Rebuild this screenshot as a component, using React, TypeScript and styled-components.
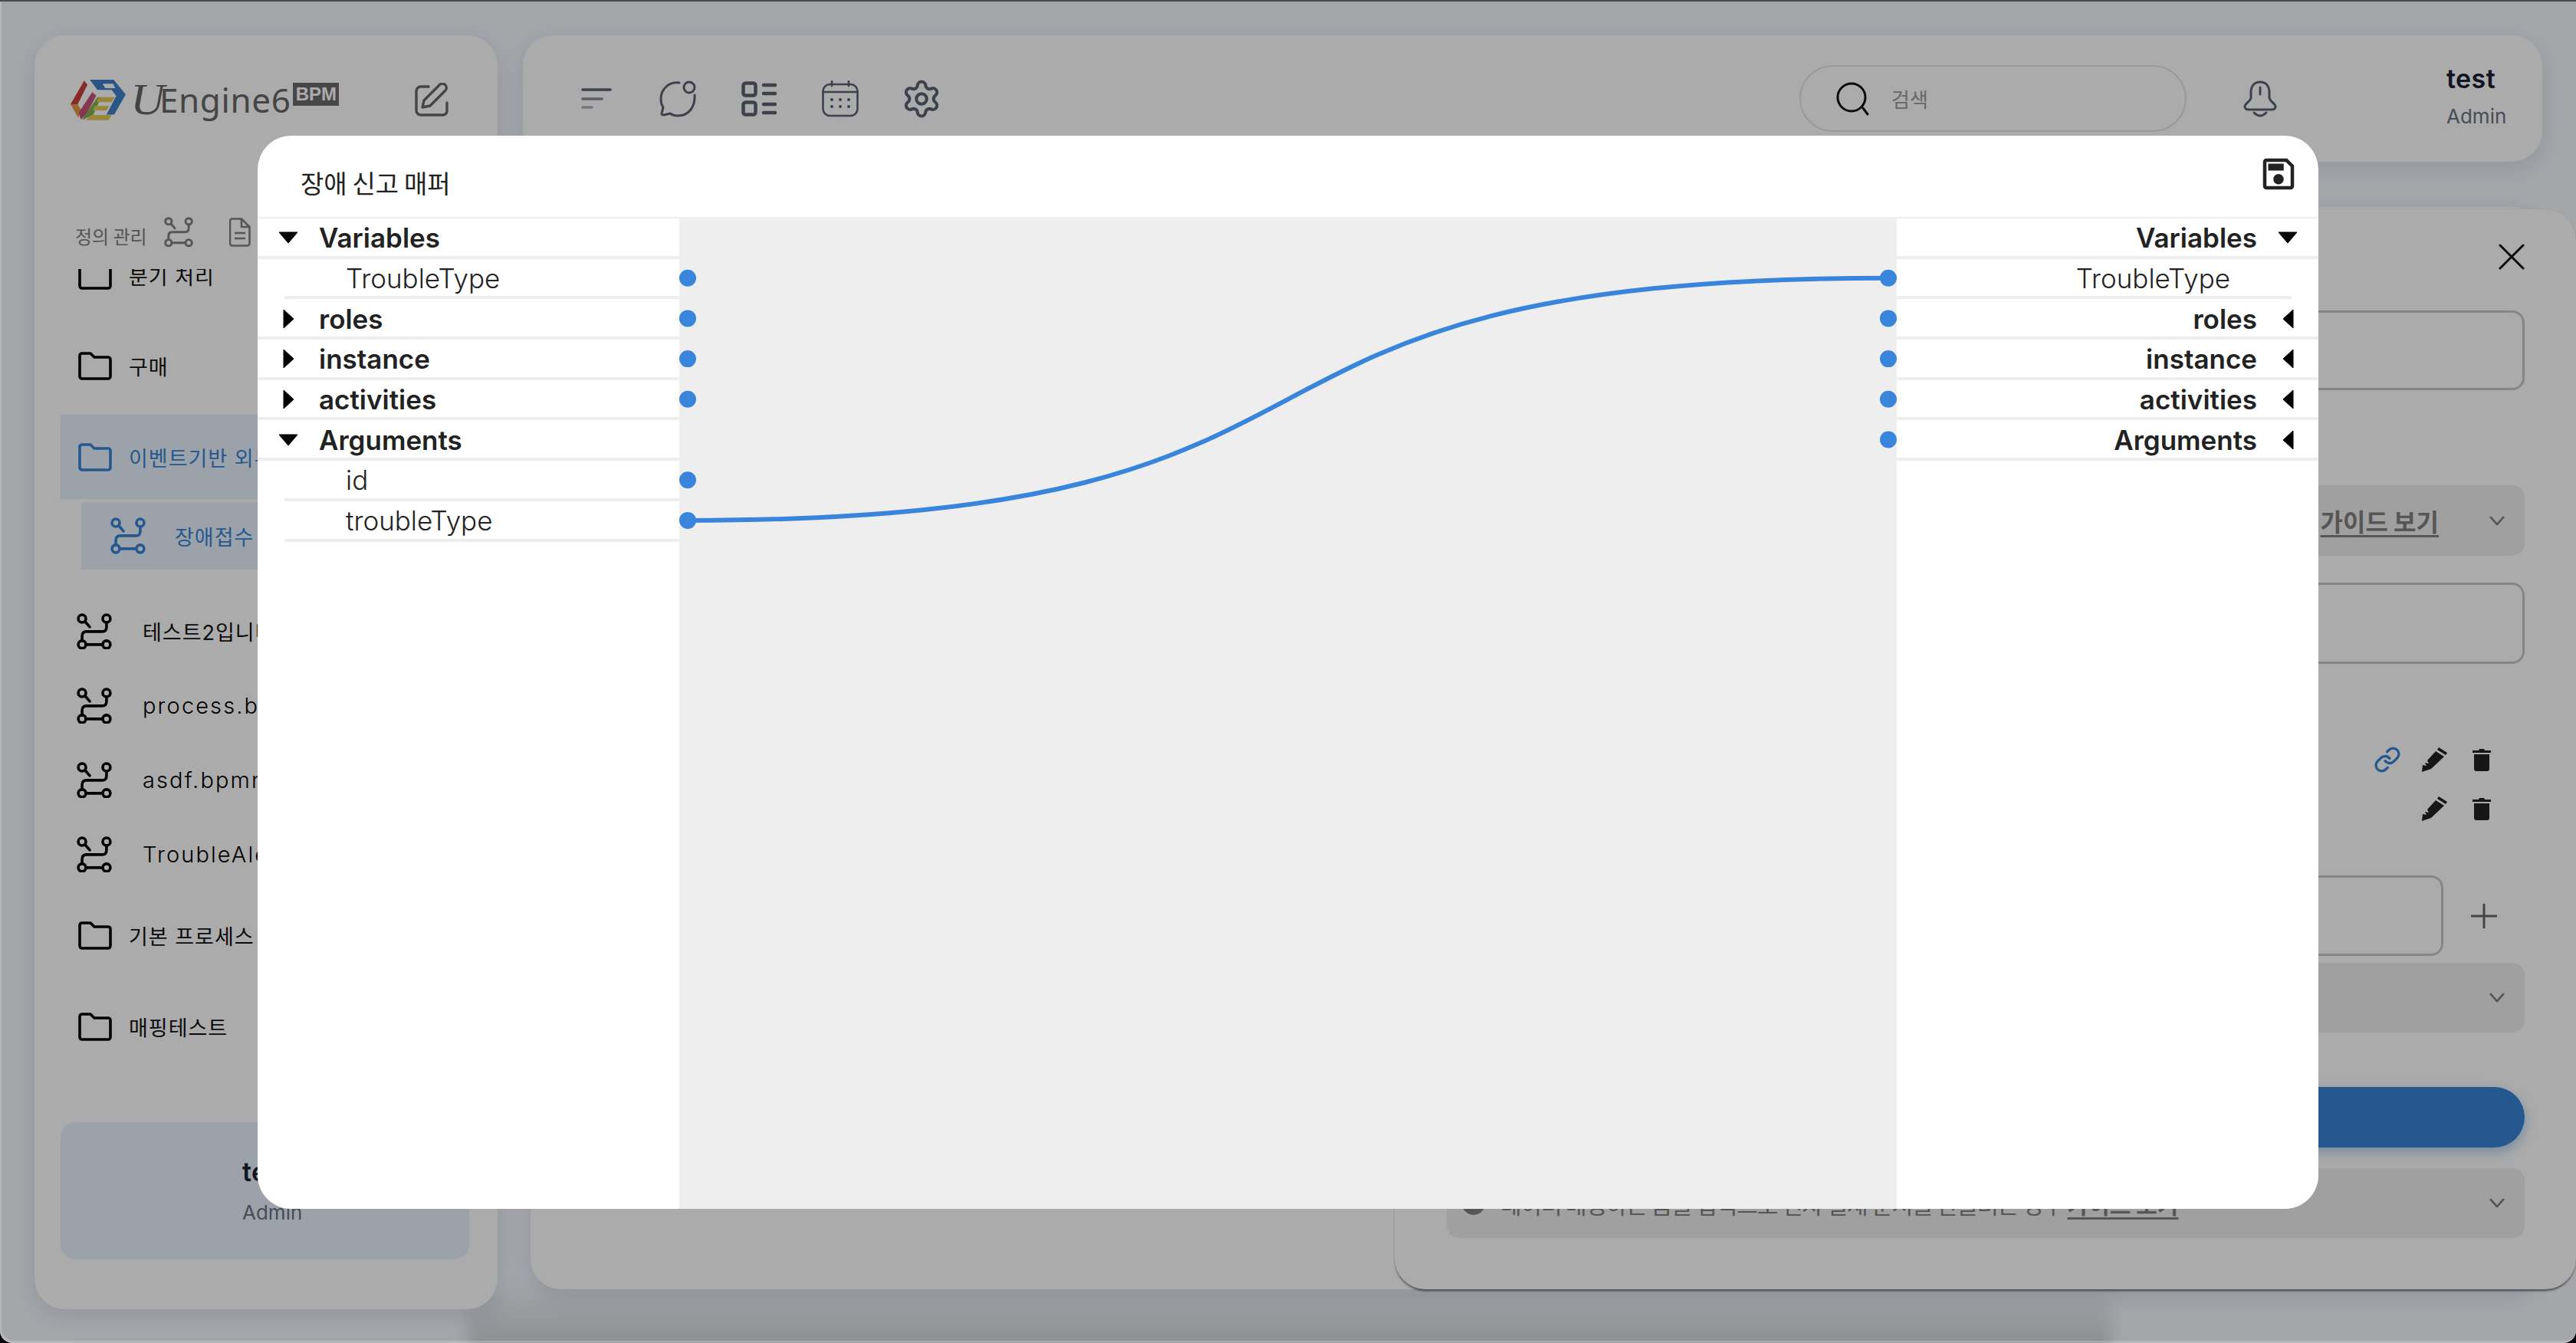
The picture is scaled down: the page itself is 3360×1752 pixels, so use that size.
// App.tsx
import styled, { createGlobalStyle } from 'styled-components';
import { Link as LinkIcon, Settings } from 'lucide-react';

const GlobalStyle = createGlobalStyle`
  html, body { margin: 0; padding: 0; background: #000; }
  body { font-family: Inter, "Noto Sans CJK KR", sans-serif; }
  * { box-sizing: border-box; }
`;

const KR = `Inter, "Noto Sans CJK KR", sans-serif`;

// ---------- page ----------
const Screen = styled.div`
  position: relative;
  width: 3360px; height: 1752px;
  overflow: hidden;
  background: #f5f8fe;
  border-radius: 0 0 16px 16px;
`;
const DockShadow = styled.div`
  position: absolute;
  left: 610px; width: 2144px; top: 1672px; height: 110px;
  background: linear-gradient(rgba(0, 0, 0, 0), rgba(0, 0, 0, .14) 75%);
  filter: blur(10px);
`;
const Layout = styled.div`
  position: relative;
  display: flex;
  gap: 33px;
  height: 100%;
  padding: 46px 44px 44px 45px;
`;
const Panel = styled.div`
  background: #fff;
  border-radius: 40px;
  box-shadow: 0 8px 30px rgba(90, 110, 140, .18);
`;

// ---------- sidebar ----------
const Sidebar = styled(Panel)`
  width: 604px; flex: none;
  display: flex; flex-direction: column;
`;
const LogoRow = styled.div`
  display: flex; align-items: center; justify-content: space-between;
  margin-top: 57px; height: 54px; padding: 0 64px 0 47px;
`;
const Logo = styled.div`display: flex; align-items: center;`;
const LogoScript = styled.span`
  font-family: "Liberation Serif", serif; font-style: italic;
  font-size: 56px; line-height: 54px; color: #666;
  margin-left: 8px; width: 36px;
  transform: scaleX(1.1);
`;
const LogoWord = styled.span`
  font-family: "Noto Sans", sans-serif;
  font-size: 44px; line-height: 54px; color: #676767; letter-spacing: .6px;
`;
const LogoBadge = styled.span`
  font-family: "Liberation Sans", sans-serif; font-weight: 700;
  align-self: flex-start; margin: 5px 0 0 3px;
  width: 60px; height: 30px; background: #6c6969; color: #fff;
  font-size: 24px; line-height: 29px; text-align: center;
`;
const NavHeader = styled.div`
  display: flex; align-items: center;
  margin-top: 127px; height: 38px; padding-left: 53px;
  font-family: "Noto Sans CJK KR", sans-serif;
  font-size: 24px; color: #7e7e7e;
  svg { flex: none; }
`;
const NavLabel = styled.span`padding-top: 9px;`;
const NavProcess = styled.span`display: flex; margin: 0 47px 0 22px;`;
const TreeScroll = styled.div`
  flex: 1; min-height: 0;
  margin: 29px 37px 0 34px;
  overflow: hidden;
`;
const TreeList = styled.div`display: flex; flex-direction: column; margin-top: -47px;`;
const TreeRow = styled.div<{ $h: number; $mt?: number; $indent?: number; $pad: number; $gap: number; $active?: boolean }>`
  display: flex; align-items: center; flex: none;
  height: ${({ $h }) => $h}px;
  margin-top: ${({ $mt }) => $mt ?? 0}px;
  margin-left: ${({ $indent }) => $indent ?? 0}px;
  padding-left: ${({ $pad }) => $pad}px;
  gap: ${({ $gap }) => $gap}px;
  white-space: nowrap;
  font-family: ${KR};
  font-size: 27px; letter-spacing: 1px;
  color: ${({ $active }) => ($active ? '#3784d5' : '#111')};
  background: ${({ $active }) => ($active ? '#e7f2fe' : 'transparent')};
  svg { flex: none; }
`;
const FileName = styled.span`font-size: 29px; font-weight: 300; letter-spacing: 2.1px; color: #000;`;
const UserCard = styled.div`
  flex: none;
  height: 179px;
  margin: 0 37px 65px 34px;
  padding-left: 237px;
  display: flex; flex-direction: column; justify-content: center; gap: 16px;
  background: #e7f2fe;
  border-radius: 20px;
`;
const UserName = styled.div`font-size: 34px; font-weight: 600; line-height: 40px; color: #1a2233; letter-spacing: .4px;`;
const UserRole = styled.div`font-size: 26px; line-height: 34px; color: #6b7280;`;

// ---------- top bar ----------
const Column = styled.div`flex: 1; min-width: 0; display: flex; flex-direction: column;`;
const TopBar = styled(Panel)`
  flex: none; height: 165px;
  display: flex; align-items: center;
  padding: 0 44px 0 43px;
`;
const ToolSlot = styled.div`width: 106px; display: flex; justify-content: center;`;
const SearchPill = styled.div`
  margin-left: auto;
  width: 505px; height: 87px;
  display: flex; align-items: center; gap: 28px;
  padding-left: 46px;
  border: 2px solid #e1e4e8;
  border-radius: 44px;
  font-family: "Noto Sans CJK KR", sans-serif;
  font-size: 26px; color: #9b9b9b;
`;
const BellSlot = styled.div`display: flex; margin-left: 73px;`;
const TopUser = styled.div`
  margin-left: 220px; width: 81px; margin-top: -6px;
  display: flex; flex-direction: column; gap: 12px;
`;
const MainPanel = styled(Panel)`
  flex: 1;
  margin: 59px 0 26px 10px;
`;

// ---------- drawer behind the dialog ----------
const Drawer = styled.div`
  position: absolute;
  left: 1819px; right: 0; top: 273px; bottom: 70px;
  padding: 45px 67px 0 68px;
  display: flex; flex-direction: column;
  background: #fff;
  border-radius: 40px;
  box-shadow: 0 3px 3px -1px rgba(0, 0, 0, .55), 0 0 2px rgba(0, 0, 0, .12);
`;
const CloseRow = styled.div`display: flex; justify-content: flex-end; height: 34px;`;
const InputBox = styled.div<{ $mt?: number; $h: number }>`
  flex: none;
  height: ${({ $h }) => $h}px;
  margin-top: ${({ $mt }) => $mt ?? 0}px;
  border: 3px solid #c8c8c8;
  border-radius: 16px;
`;
const InfoBar = styled.div<{ $mt: number; $h: number }>`
  flex: none;
  display: flex; align-items: center;
  height: ${({ $h }) => $h}px;
  margin-top: ${({ $mt }) => $mt}px;
  padding: 0 26px 0 20px;
  background: #efefef;
  border-radius: 16px;
  font-family: "Noto Sans CJK KR", sans-serif;
  font-size: 30px; color: #808080;
  white-space: nowrap;
`;
const InfoText = styled.span`flex: 1; margin-left: 20px; letter-spacing: -1.1px;`;
const GuideLink = styled.span`
  font-weight: 700;
  text-decoration: underline; text-decoration-thickness: 3px; text-underline-offset: 5px;
  letter-spacing: 0;
`;
const GuideRight = styled.span`margin-left: auto; margin-right: 66px; font-size: 32px;`;
const ActionRow = styled.div<{ $mt: number }>`
  flex: none;
  display: flex; align-items: center; justify-content: flex-end; gap: 33px;
  height: 34px;
  margin-top: ${({ $mt }) => $mt}px;
  padding-right: 44px;
`;
const LinkSlot = styled.span`display: flex; margin-right: -6px;`;
const AddRow = styled.div`display: flex; flex: none; margin-top: 70px;`;
const AddInput = styled(InputBox)`flex: 1;`;
const AddButton = styled.div`
  width: 106px; flex: none;
  display: flex; align-items: center; justify-content: center;
`;
const PrimaryButton = styled.div`
  flex: none;
  height: 79px; margin-top: 71px;
  background: #3784d5;
  border-radius: 40px;
  box-shadow: 0 6px 16px rgba(55, 132, 213, .4);
`;

// ---------- dialog ----------
const Scrim = styled.div`
  position: absolute; inset: 0;
  background: rgba(0, 0, 0, .33);
  border-top: 2px solid #4a4a4a;
  box-shadow: inset 2px -3px 0 rgba(255, 255, 255, .2);
  border-radius: 0 0 16px 16px;
`;
const Dialog = styled.div`
  position: absolute;
  left: 336px; top: 177px; width: 2688px; height: 1400px;
  display: flex; flex-direction: column;
  background: #fff;
  border-radius: 44px;
  overflow: hidden;
`;
const DialogHeader = styled.div`
  flex: none; height: 106px;
  display: flex; align-items: center; justify-content: space-between;
  padding: 0 25px 0 56px;
`;
const DialogTitle = styled.div`
  padding-top: 16px;
  font-family: "Noto Sans CJK KR", sans-serif;
  font-size: 33px; color: #222; letter-spacing: -.2px;
`;
const SaveGlyph = styled.svg`margin-bottom: 6px;`;
const MapperBody = styled.div`
  flex: 1; min-height: 0;
  display: flex;
  border-top: 2px solid #eee;
`;
const Tree = styled.div`width: 550px; flex: none; background: #fff;`;
const MapRow = styled.div<{ $right?: boolean; $child?: boolean }>`
  display: flex; align-items: center;
  height: 52.7px;
  padding-top: 2px;
  flex-direction: ${({ $right }) => ($right ? 'row-reverse' : 'row')};
  margin-left: ${({ $child, $right }) => ($child && !$right ? 35 : 0)}px;
  margin-right: ${({ $child, $right }) => ($child && $right ? 35 : 0)}px;
  border-bottom: 4px solid #eee;
  font-size: 35px;
  font-weight: ${({ $child }) => ($child ? 300 : 600)};
  color: #222;
`;
const Caret = styled.span`
  flex: none; display: flex; align-items: center; justify-content: center;
  width: 80px;
`;
const ChildLabel = styled.span<{ $right?: boolean }>`
  ${({ $right }) => ($right ? 'margin-right: 80px;' : 'margin-left: 80px;')}
`;
const Canvas = styled.div`flex: 1; min-width: 0; background: #eee;`;
const WireSvg = styled.svg`display: block;`;

// ---------- icons ----------
const FolderIcon = ({ color = '#000' }: { color?: string }) => (
  <svg width="44" height="37" viewBox="0 0 44 37" fill="none">
    <path d="M2 5a3 3 0 0 1 3-3h11l5 5h18a3 3 0 0 1 3 3v22a3 3 0 0 1-3 3H5a3 3 0 0 1-3-3Z" stroke={color} strokeWidth="3.6" strokeLinejoin="round" />
  </svg>
);
const ProcessIcon = ({ color = '#000', w = 46 }: { color?: string; w?: number }) => (
  <svg width={w} height={w * 1.04} viewBox="0 0 46 48" fill="none" stroke={color} strokeWidth="3.6" strokeLinecap="round">
    <circle cx="7" cy="7" r="5" />
    <circle cx="39" cy="7" r="5" />
    <path d="M11 11l6 7" />
    <path d="M39 12v6q0 6-6 6H13q-6 0-6 6v6" />
    <circle cx="7" cy="41" r="5" />
    <circle cx="39" cy="41" r="5" />
    <path d="M12 41h22" />
  </svg>
);
const DocIcon = () => (
  <svg width="28" height="38" viewBox="0 0 28 38" fill="none" stroke="#808080" strokeWidth="2.6" strokeLinejoin="round">
    <path d="M3 1.5h13L26.5 12v21.5a3 3 0 0 1-3 3H4a3 3 0 0 1-3-3V4.500a3 3 0 0 1 2-3Z" />
    <path d="M16 1.500V12h10.500M7 20h14M7 27h14" />
  </svg>
);
const EditIcon = () => (
  <svg width="44" height="44" viewBox="0 0 44 44" fill="none" stroke="#676767" strokeWidth="3.4" strokeLinecap="round" strokeLinejoin="round">
    <path d="M18 5H8a6 6 0 0 0-6 6v25a6 6 0 0 0 6 6h29a6 6 0 0 0 5-5v-11" />
    <path d="M10 32l2-9L32 3a4 4 0 0 1 8 7L20 30Z" />
  </svg>
);
const CubeLogo = () => (
  <svg width="72" height="54" viewBox="0 0 215 160">
    <path fillRule="evenodd" d="M75 2H168L215 60L170 138H140L178 66L160 42H105ZM125 18L135 35H175L165 18Z" fill="#3f80c6" />
    <path d="M53 6L66 22L28 98H0Z" fill="#c9403f" />
    <path d="M0 98H28L42 122L30 150Z" fill="#e89a4a" />
    <path d="M85 50L100 65L60 140L40 158L32 130Z" fill="#c8547a" />
    <path d="M105 70H120L88 140L45 160L60 135Z" fill="#7fb24d" />
    <path d="M110 70H172L160 90H100ZM95 105H150L140 122H86ZM80 140H160L148 160H60Z" fill="#e2c958" />
  </svg>
);
const SortIcon = () => (
  <svg width="40" height="28" viewBox="0 0 40 28" fill="none" strokeLinecap="round" strokeWidth="3.6">
    <path d="M2 2h36" stroke="#5a6272" />
    <path d="M2 14h25" stroke="#8a8f99" />
    <path d="M2 25h12" stroke="#b0b3ba" />
  </svg>
);
const ChatIcon = () => (
  <svg width="48" height="48" viewBox="0 0 48 48" fill="none" stroke="#5a6272" strokeWidth="3" strokeLinecap="round">
    <path d="M26 3C12 1 2 12 2 24c0 5 1 8 3 11l-2 8c0 2 1 2 3 2l8-2c3 2 6 3 10 3 14 0 23-11 22-27" />
    <circle cx="39" cy="9" r="7" />
  </svg>
);
const GridIcon = () => (
  <svg width="46" height="46" viewBox="0 0 46 46" fill="none" stroke="#5a6272" strokeLinecap="round">
    <rect x="2.500" y="2.500" width="16" height="16" rx="3" strokeWidth="4.500" />
    <rect x="2.500" y="27.500" width="16" height="16" rx="3" strokeWidth="4.500" />
    <path d="M29 5h15M29 16h15M29 30h15M29 41h15" strokeWidth="4.500" />
  </svg>
);
const CalendarIcon = () => (
  <svg width="48" height="48" viewBox="0 0 48 48" fill="none" stroke="#5a6272" strokeWidth="2.600" strokeLinecap="round">
    <rect x="1.500" y="5" width="45" height="41" rx="9" />
    <path d="M1.500 15h45M13 1v6M35 1v6" />
    <g fill="#5a6272" stroke="none">
      <circle cx="13" cy="25" r="2" /><circle cx="24" cy="25" r="2" /><circle cx="35" cy="25" r="2" />
      <circle cx="13" cy="34" r="2" /><circle cx="24" cy="34" r="2" /><circle cx="35" cy="34" r="2" />
    </g>
  </svg>
);
const SearchIcon = () => (
  <svg width="44" height="44" viewBox="0 0 44 44" fill="none" stroke="#111" strokeWidth="3" strokeLinecap="round">
    <circle cx="20" cy="20" r="18" />
    <path d="M35 34l6 8" />
  </svg>
);
const BellIcon = () => (
  <svg width="46" height="48" viewBox="0 0 46 48" fill="none" stroke="#5a6272" strokeWidth="3" strokeLinecap="round" strokeLinejoin="round">
    <path d="M23 2C14 2 11 9 11 16v6c0 5-8 8-8 12 0 3 3 4 6 4h28c3 0 6-1 6-4 0-4-8-7-8-12v-6c0-7-3-14-12-14Z" />
    <path d="M23 9v9M15 42q8 8 16 0" />
  </svg>
);
const CloseIcon = () => (
  <svg width="34" height="34" viewBox="0 0 34 34" stroke="#111" strokeWidth="3" strokeLinecap="round">
    <path d="M2 2l30 30M32 2L2 32" />
  </svg>
);
const ChevronIcon = () => (
  <svg width="20" height="13" viewBox="0 0 22 14" fill="none" stroke="#808080" strokeWidth="3" strokeLinecap="round" strokeLinejoin="round">
    <path d="M2 2l9 10 9-10" />
  </svg>
);
const PencilIcon = () => (
  <svg width="33" height="32" viewBox="0 0 33 32" fill="#222">
    <path d="M22 0l11 7-2 3-11-7ZM18 5l11 7L12 28 0 32l1-9 5 1-2-4 5 1-2-4Z" />
  </svg>
);
const TrashIcon = () => (
  <svg width="24" height="30" viewBox="0 0 24 30" fill="#222">
    <path d="M0 3h8l1-2h6l1 2h8v3H0ZM2 8h20v19a3 3 0 0 1-3 3H5a3 3 0 0 1-3-3Z" />
  </svg>
);
const PlusIcon = () => (
  <svg width="34" height="32" viewBox="0 0 34 32" stroke="#666" strokeWidth="3">
    <path d="M0 16h34M17 0v32" />
  </svg>
);
const InfoDot = () => (
  <svg width="30" height="30" viewBox="0 0 30 30"><circle cx="15" cy="15" r="15" fill="#808080" /></svg>
);
const SaveIcon = () => (
  <SaveGlyph width="54" height="54" viewBox="0 0 24 24" fill="#222">
    <path d="M17 3H5c-1.110 0-2 .9-2 2v14c0 1.100.89 2 2 2h14c1.100 0 2-.9 2-2V7l-4-4zm2 16H5V5h11.170L19 7.830V19zm-7-7c-1.660 0-3 1.340-3 3s1.340 3 3 3 3-1.340 3-3-1.340-3-3-3zM6 6h9v4H6z" />
  </SaveGlyph>
);
const TriDown = () => (
  <svg width="26" height="16" viewBox="0 0 26 16"><path d="M1 1h24L13 15Z" fill="#000" stroke="#000" strokeLinejoin="round" /></svg>
);
const TriRight = () => (
  <svg width="15" height="26" viewBox="0 0 15 26"><path d="M1 1v24l13-12Z" fill="#000" stroke="#000" strokeLinejoin="round" /></svg>
);
const TriLeft = () => (
  <svg width="15" height="26" viewBox="0 0 15 26"><path d="M14 1v24L1 13Z" fill="#000" stroke="#000" strokeLinejoin="round" /></svg>
);

// ---------- data ----------
type Node = { label: string; open?: boolean; child?: boolean };

const leftTree: Node[] = [
  { label: 'Variables', open: true },
  { label: 'TroubleType', child: true },
  { label: 'roles' },
  { label: 'instance' },
  { label: 'activities' },
  { label: 'Arguments', open: true },
  { label: 'id', child: true },
  { label: 'troubleType', child: true },
];
const rightTree: Node[] = [
  { label: 'Variables', open: true },
  { label: 'TroubleType', child: true },
  { label: 'roles' },
  { label: 'instance' },
  { label: 'activities' },
  { label: 'Arguments' },
];

const ROW = 52.7;
const rowY = (i: number) => i * ROW + 25;
const leftPorts = leftTree.map((n, i) => (n.open ? -1 : rowY(i))).filter(y => y > 0);
const rightPorts = rightTree.map((n, i) => (n.open ? -1 : rowY(i))).filter(y => y > 0);
const LX = 11;
const RX = 1577;

const MapperTree = ({ nodes, right }: { nodes: Node[]; right?: boolean }) => (
  <Tree>
    {nodes.map(n => (
      <MapRow key={n.label} $right={right} $child={n.child}>
        {n.child ? (
          <ChildLabel $right={right}>{n.label}</ChildLabel>
        ) : (
          <>
            <Caret>{n.open ? <TriDown /> : right ? <TriLeft /> : <TriRight />}</Caret>
            <span>{n.label}</span>
          </>
        )}
      </MapRow>
    ))}
  </Tree>
);

export default function App() {
  const fromY = leftPorts[leftPorts.length - 1];
  const toY = rightPorts[0];
  const bend = (RX - LX) * 0.62;

  return (
    <Screen>
      <GlobalStyle />
      <DockShadow />
      <Layout>
        <Sidebar>
          <LogoRow>
            <Logo>
              <CubeLogo />
              <LogoScript>U</LogoScript>
              <LogoWord>Engine6</LogoWord>
              <LogoBadge>BPM</LogoBadge>
            </Logo>
            <EditIcon />
          </LogoRow>
          <NavHeader>
            <NavLabel>정의 관리</NavLabel>
            <NavProcess><ProcessIcon color="#808080" w={38} /></NavProcess>
            <DocIcon />
          </NavHeader>
          <TreeScroll>
            <TreeList>
              <TreeRow $h={110} $pad={23} $gap={22}><FolderIcon />분기 처리</TreeRow>
              <TreeRow $h={110} $mt={8} $pad={23} $gap={22}><FolderIcon />구매</TreeRow>
              <TreeRow $h={110} $mt={9} $pad={23} $gap={22} $active><FolderIcon color="#3784d5" />이벤트기반 외부 호출</TreeRow>
              <TreeRow $h={88} $mt={4} $indent={27} $pad={38} $gap={38} $active><ProcessIcon color="#3784d5" />장애접수 프로세스</TreeRow>
              <TreeRow $h={97} $mt={32} $pad={21} $gap={40}><ProcessIcon />테스트2입니다.bpmn</TreeRow>
              <TreeRow $h={97} $pad={21} $gap={40}><ProcessIcon /><FileName>process.bpmn</FileName></TreeRow>
              <TreeRow $h={97} $pad={21} $gap={40}><ProcessIcon /><FileName>asdf.bpmn</FileName></TreeRow>
              <TreeRow $h={97} $pad={21} $gap={40}><ProcessIcon /><FileName>TroubleAlert.bpmn</FileName></TreeRow>
              <TreeRow $h={110} $mt={2} $pad={23} $gap={22}><FolderIcon />기본 프로세스</TreeRow>
              <TreeRow $h={110} $mt={9} $pad={23} $gap={22}><FolderIcon />매핑테스트</TreeRow>
            </TreeList>
          </TreeScroll>
          <UserCard>
            <UserName>test</UserName>
            <UserRole>Admin</UserRole>
          </UserCard>
        </Sidebar>

        <Column>
          <TopBar>
            <ToolSlot><SortIcon /></ToolSlot>
            <ToolSlot><ChatIcon /></ToolSlot>
            <ToolSlot><GridIcon /></ToolSlot>
            <ToolSlot><CalendarIcon /></ToolSlot>
            <ToolSlot><Settings size={54} strokeWidth={1.8} color="#5a6272" /></ToolSlot>
            <SearchPill><SearchIcon />검색</SearchPill>
            <BellSlot><BellIcon /></BellSlot>
            <TopUser>
              <UserName>test</UserName>
              <UserRole>Admin</UserRole>
            </TopUser>
          </TopBar>
          <MainPanel />
        </Column>
      </Layout>

      <Drawer>
        <CloseRow><CloseIcon /></CloseRow>
        <InputBox $mt={53} $h={104} />
        <InfoBar $mt={124} $h={92}>
          <GuideRight><GuideLink>가이드 보기</GuideLink></GuideRight>
          <ChevronIcon />
        </InfoBar>
        <InputBox $mt={35} $h={106} />
        <ActionRow $mt={108}>
          <LinkSlot><LinkIcon size={36} color="#3784d5" strokeWidth={2.2} /></LinkSlot>
          <PencilIcon />
          <TrashIcon />
        </ActionRow>
        <ActionRow $mt={30}>
          <PencilIcon />
          <TrashIcon />
        </ActionRow>
        <AddRow>
          <AddInput $h={105} />
          <AddButton><PlusIcon /></AddButton>
        </AddRow>
        <InfoBar $mt={9} $h={91}>
          <GuideRight />
          <ChevronIcon />
        </InfoBar>
        <PrimaryButton />
        <InfoBar $mt={27} $h={91}>
          <InfoDot />
          <InfoText>데이터 매핑하는 폼을 입력으로 전자 결재 문서를 만들려는 경우 <GuideLink>가이드 보기</GuideLink></InfoText>
          <ChevronIcon />
        </InfoBar>
      </Drawer>

      <Scrim />

      <Dialog>
        <DialogHeader>
          <DialogTitle>장애 신고 매퍼</DialogTitle>
          <SaveIcon />
        </DialogHeader>
        <MapperBody>
          <MapperTree nodes={leftTree} />
          <Canvas>
            <WireSvg width="1588" height="1292" viewBox="0 0 1588 1292">
              <path d={`M${LX} ${fromY}C${LX + bend} ${fromY} ${RX - bend} ${toY} ${RX} ${toY}`} fill="none" stroke="#3a85dc" strokeWidth="6" />
              {leftPorts.map(y => <circle key={y} cx={LX} cy={y} r="11" fill="#3a85dc" />)}
              {rightPorts.map(y => <circle key={y} cx={RX} cy={y} r="11" fill="#3a85dc" />)}
            </WireSvg>
          </Canvas>
          <MapperTree nodes={rightTree} right />
        </MapperBody>
      </Dialog>
    </Screen>
  );
}
